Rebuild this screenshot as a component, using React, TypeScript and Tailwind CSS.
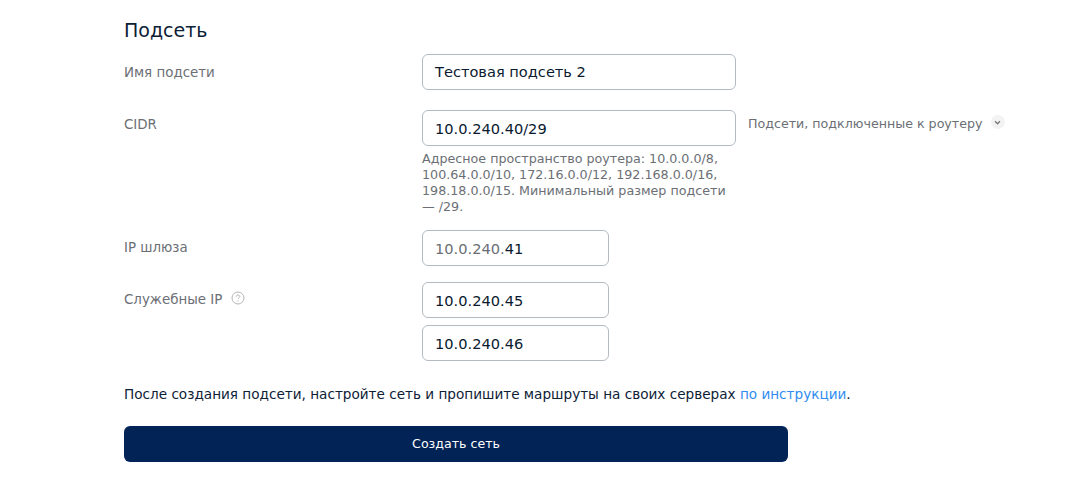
import React from 'react';

const inputBase = 'h-9 border border-[#b4bac2] rounded-md bg-white px-3 flex items-center text-[14.6px] text-[#0a1a2f]';

export default function App() {
  return (
    <div className="min-h-[483px] bg-white pl-[124px] pt-[17px] font-['DejaVu_Sans',sans-serif] antialiased">
      <h2 className="text-[19px] leading-[26px] text-[#0d2136] mb-[11px]">Подсеть</h2>

      <div className="flex mb-5">
        <div className="w-[298px] pt-[11px] text-[13.4px] leading-4 text-[#6b6f75]">Имя подсети</div>
        <div className={`${inputBase} w-[314px]`}>Тестовая подсеть 2</div>
      </div>

      <div className="flex mb-[15px]">
        <div className="w-[298px] pt-[7px] text-[13.4px] leading-4 text-[#6b6f75]">CIDR</div>
        <div className="w-[314px]">
          <div className={`${inputBase} pt-[2px]`}>10.0.240.40/29</div>
          <p className="mt-[5px] text-[12.7px] leading-4 text-[#6b6f75]">
            Адресное пространство роутера: 10.0.0.0/8, 100.64.0.0/10, 172.16.0.0/12, 192.168.0.0/16, 198.18.0.0/15. Минимальный размер подсети — /29.
          </p>
        </div>
        <div className="ml-3 flex items-start gap-2 pt-[6px] text-[12.65px] leading-4 text-[#6b6f75]">
          <span>Подсети, подключенные к роутеру</span>
          <span className="w-[14px] h-[14px] -mt-px rounded-full bg-[#f3f3f3] flex items-center justify-center">
            <svg width="7" height="5" viewBox="0 0 8 6" fill="none" stroke="#777" strokeWidth="1.5">
              <path d="M1 1.5l3 3 3-3" />
            </svg>
          </span>
        </div>
      </div>

      <div className="flex mb-4">
        <div className="w-[298px] pt-[10px] text-[13.4px] leading-4 text-[#6b6f75]">IP шлюза</div>
        <div className={`${inputBase} w-[187px] pt-[2px]`}>
          <span className="text-[#6b6f75]">10.0.240.</span>41
        </div>
      </div>

      <div className="flex mb-[25px]">
        <div className="w-[298px] pt-[10px] text-[13.4px] leading-4 text-[#6b6f75] flex items-start gap-[9px]">
          <span>Служебные IP</span>
          <svg className="-mt-px" width="14" height="14" viewBox="0 0 14 14" fill="none" stroke="#b5b5b5" strokeWidth="1">
            <circle cx="7" cy="7" r="6" />
            <path d="M5.2 5.6c0-1 .8-1.6 1.8-1.6s1.8.6 1.8 1.5c0 1.3-1.8 1.3-1.8 2.7" />
            <path d="M7 9.4v1.1" />
          </svg>
        </div>
        <div className="w-[187px] flex flex-col gap-[7px]">
          <div className={`${inputBase} pt-[2px]`}>10.0.240.45</div>
          <div className={`${inputBase} pt-[2px]`}>10.0.240.46</div>
        </div>
      </div>

      <p className="text-[13.6px] leading-4 text-[#0d2136] mb-[24px]">
        После создания подсети, настройте сеть и пропишите маршруты на своих серверах{' '}
        <a className="text-[#2f8cf0]" href="#">по инструкции</a>.
      </p>

      <button className="w-[664px] h-9 rounded-md bg-[#012356] text-white text-[12.6px]">Создать сеть</button>
    </div>
  );
}
